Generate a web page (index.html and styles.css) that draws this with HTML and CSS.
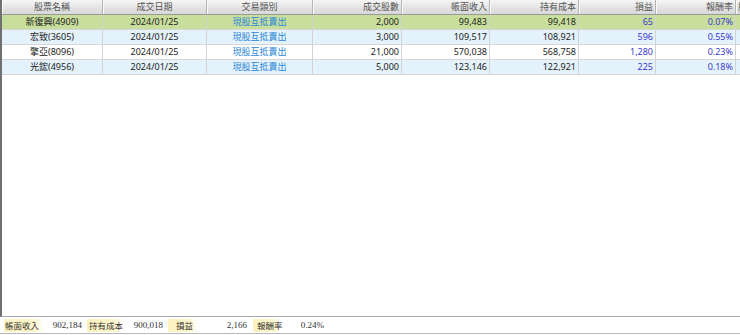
FILE: index.html
```html
<!DOCTYPE html>
<html>
<head>
<meta charset="utf-8">
<link rel="stylesheet" href="styles.css">
</head>
<body>
<div class="page">
  <div class="grid">
    <div class="row head">
      <div class="c ctr">股票名稱</div>
      <div class="c ctr">成交日期</div>
      <div class="c ctr">交易類別</div>
      <div class="c rt">成交股數</div>
      <div class="c rt">帳面收入</div>
      <div class="c rt">持有成本</div>
      <div class="c rt">損益</div>
      <div class="c rt">報酬率</div>
      <div class="c lf">股票</div>
    </div>
    <div class="row green">
      <div class="c ctr">新復興(4909)</div>
      <div class="c ctr">2024/01/25</div>
      <div class="c ctr type">現股互抵賣出</div>
      <div class="c rt">2,000</div>
      <div class="c rt">99,483</div>
      <div class="c rt">99,418</div>
      <div class="c rt pl">65</div>
      <div class="c rt pl">0.07%</div>
      <div class="c"></div>
    </div>
    <div class="row blue">
      <div class="c ctr">宏致(3605)</div>
      <div class="c ctr">2024/01/25</div>
      <div class="c ctr type">現股互抵賣出</div>
      <div class="c rt">3,000</div>
      <div class="c rt">109,517</div>
      <div class="c rt">108,921</div>
      <div class="c rt pl">596</div>
      <div class="c rt pl">0.55%</div>
      <div class="c"></div>
    </div>
    <div class="row">
      <div class="c ctr">擎亞(8096)</div>
      <div class="c ctr">2024/01/25</div>
      <div class="c ctr type">現股互抵賣出</div>
      <div class="c rt">21,000</div>
      <div class="c rt">570,038</div>
      <div class="c rt">568,758</div>
      <div class="c rt pl">1,280</div>
      <div class="c rt pl">0.23%</div>
      <div class="c"></div>
    </div>
    <div class="row blue">
      <div class="c ctr">光鋐(4956)</div>
      <div class="c ctr">2024/01/25</div>
      <div class="c ctr type">現股互抵賣出</div>
      <div class="c rt">5,000</div>
      <div class="c rt">123,146</div>
      <div class="c rt">122,921</div>
      <div class="c rt pl">225</div>
      <div class="c rt pl">0.18%</div>
      <div class="c"></div>
    </div>
  </div>
  <div class="summary">
    <div class="lbl l1">帳面收入</div>
    <div class="val v1">902,184</div>
    <div class="lbl l2">持有成本</div>
    <div class="val v2">900,018</div>
    <div class="lbl l3">損益</div>
    <div class="val v3">2,166</div>
    <div class="lbl l4">報酬率</div>
    <div class="val v4">0.24%</div>
  </div>
</div>
</body>
</html>
```

FILE: styles.css
```css
html, body {
  margin: 0;
  padding: 0;
  background: #ffffff;
}
body {
  width: 740px;
  height: 335px;
  overflow: hidden;
  font-family: "Noto Sans", "Noto Sans CJK TC", sans-serif;
  font-size: 9px;
  color: #222222;
}
.page {
  width: 740px;
  height: 335px;
  display: flex;
  flex-direction: column;
}
.grid {
  height: 315px;
  border-left: 2px solid #707070;
  border-bottom: 1px solid #a8a8a8;
  overflow: hidden;
  box-sizing: border-box;
  height: 317px;
}
.row {
  display: grid;
  grid-template-columns: 101px 104px 106px 89px 88px 89px 77px 80px 60px;
  height: 15px;
  border-bottom: 1px solid #d6d6d6;
  box-sizing: border-box;
  background: #ffffff;
}
.row .c {
  border-right: 1px solid #d2d2d2;
  line-height: 14px;
  white-space: nowrap;
  overflow: hidden;
  padding: 0 2px;
}
.head {
  height: 15px;
  background: linear-gradient(#f6f6f6, #e2e2e2 60%, #d8d8d8);
  border-bottom: 1px solid #9a9a9a;
  color: #555555;
}
.head .c {
  border-right: 1px solid #b4b4b4;
  box-shadow: inset 1px 0 0 #fafafa;
}
.green { background: #c8de9c; }
.blue { background: #e4f2fb; }
.ctr { text-align: center; }
.rt { text-align: right; }
.lf { text-align: left; }
.type { color: #2a86d8; }
.pl { color: #3a3acc; }

.summary {
  display: flex;
  align-items: center;
  height: 15px;
  margin-top: 1px;
  border-bottom: 1px solid #b8b8b8;
  font-family: "Liberation Serif", "Noto Sans CJK TC", serif;
  font-size: 9px;
  color: #333333;
  line-height: 13px;
}
.lbl {
  height: 13px;
  background: linear-gradient(to right, #fbf2c0, #fdf6cc 75%, #ffffff);
  font-family: "Noto Sans CJK TC", sans-serif;
  font-size: 8.5px;
  color: #333333;
  white-space: nowrap;
}
.val { text-align: right; white-space: nowrap; }
.l1 { margin-left: 4px; width: 40px; padding-left: 1px; box-sizing: border-box; }
.v1 { width: 38px; }
.l2 { margin-left: 5px; width: 37px; padding-left: 2px; box-sizing: border-box; }
.v2 { width: 39px; }
.l3 { margin-left: 5px; width: 30px; padding-left: 8px; box-sizing: border-box; }
.v3 { width: 49px; }
.l4 { margin-left: 6px; width: 28px; padding-left: 4px; box-sizing: border-box; }
.v4 { width: 43px; }
```
